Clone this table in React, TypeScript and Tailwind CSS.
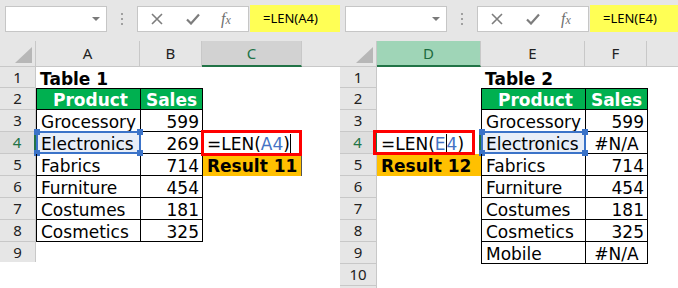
import React from 'react';

const cellFont = "font-['DejaVu_Sans','Verdana',sans-serif] text-[17px] leading-none";
const hdrFont = "font-['Noto_Sans','Segoe_UI',sans-serif] text-[15px]";

// Formula bar strip with name box, separator dots, fx box and the yellow formula text
const Toolbar: React.FC<{ formula: string }> = ({ formula }) => (
    <div className="h-[41px] shrink-0 bg-[#e6e6e6] flex items-start pt-[6px] pl-[5px]">
        <div className="w-[102px] h-[26px] bg-white border border-[#c6c6c6] flex items-center justify-end pr-[6px]">
            <svg width="8" height="4" viewBox="0 0 8 4"><path d="M0 0H8L4 4Z" fill="#7a7a7a" /></svg>
        </div>
        <div className="w-[30px] h-[26px] flex flex-col items-center justify-center gap-[3px]">
            <div className="w-[2px] h-[2px] bg-[#a0a0a0]" />
            <div className="w-[2px] h-[2px] bg-[#a0a0a0]" />
            <div className="w-[2px] h-[2px] bg-[#a0a0a0]" />
        </div>
        <div className="w-[112px] h-[26px] bg-white border border-[#c6c6c6] flex items-center">
            <svg className="ml-[13px]" width="12" height="12" viewBox="0 0 12 12">
                <path d="M1 1L11 11M11 1L1 11" stroke="#7d7d7d" strokeWidth="1.6" fill="none" />
            </svg>
            <svg className="ml-[23px]" width="14" height="12" viewBox="0 0 14 12">
                <path d="M1 6.5L5 10.5L13 1.5" stroke="#7d7d7d" strokeWidth="2.2" fill="none" />
            </svg>
            <span className="ml-[21px] font-['Liberation_Serif',serif] italic text-[16px] text-[#6f6f6f] leading-none">
                f<span className="text-[12px]">x</span>
            </span>
        </div>
        <div className="flex-1 h-[27px] -mt-[1px] ml-[1px] bg-[#ffff55] flex items-center pl-[13px] font-['Noto_Sans','Segoe_UI',sans-serif] text-[13px] text-black">
            {formula}
        </div>
    </div>
);

const Corner: React.FC<{ w: string }> = ({ w }) => (
    <div className={`${w} shrink-0 h-full border-r border-[#c8c8c8] flex items-end justify-end pr-[3px] pb-[3px]`}>
        <svg width="17" height="16" viewBox="0 0 17 16"><path d="M17 0V16H0Z" fill="#b7b7b7" /></svg>
    </div>
);

const Cursor: React.FC = () => <span className="inline-block w-px h-[19px] bg-black -mt-[3px]" />;

const Handles: React.FC = () => (
    <div className="absolute -inset-[1px] border-2 border-[#3b73c8] pointer-events-none">
        <div className="absolute -top-[4px] -left-[4px] w-[6px] h-[6px] bg-[#3b73c8]" />
        <div className="absolute -top-[4px] -right-[4px] w-[6px] h-[6px] bg-[#3b73c8]" />
        <div className="absolute -bottom-[4px] -left-[4px] w-[6px] h-[6px] bg-[#3b73c8]" />
        <div className="absolute -bottom-[4px] -right-[4px] w-[6px] h-[6px] bg-[#3b73c8]" />
    </div>
);

const rowHdr = `shrink-0 h-full flex items-center justify-center border-r border-b border-[#c8c8c8] bg-[#e6e6e6] text-[#222] ${hdrFont}`;
const rowHdrActive = `shrink-0 h-full flex items-center justify-center border-b border-[#c8c8c8] border-r-2 border-r-[#217346] bg-[#dedede] text-[#217346] ${hdrFont}`;

// table cells
const tName = "w-[104px] shrink-0 h-full border-l border-b border-black flex items-center pl-[4px] pt-[3px]";
const tNum = "w-[63px] shrink-0 h-full border-x border-b border-black flex items-center justify-end pr-[3px] pt-[3px]";
const tNumC = "w-[63px] shrink-0 h-full border-x border-b border-black flex items-center justify-center pt-[3px]";
const gHead = "bg-[#00b050] text-white font-bold justify-center pl-0 border-t";

const leftData: [string, string][] = [
    ['Grocessory', '599'],
    ['Electronics', '269'],
    ['Fabrics', '714'],
    ['Furniture', '454'],
    ['Costumes', '181'],
    ['Cosmetics', '325'],
];

const rightData: [string, string][] = [
    ['Grocessory', '599'],
    ['Electronics', '#N/A'],
    ['Fabrics', '714'],
    ['Furniture', '454'],
    ['Costumes', '181'],
    ['Cosmetics', '325'],
    ['Mobile', '#N/A'],
];

const LeftSheet: React.FC = () => (
    <div className="w-[340px] shrink-0 h-[288px] flex flex-col bg-white overflow-hidden">
        <Toolbar formula="=LEN(A4)" />
        {/* column headers */}
        <div className={`h-[26px] shrink-0 flex bg-[#e6e6e6] border-b border-[#c8c8c8] text-[#222] ${hdrFont}`}>
            <Corner w="w-[36px]" />
            <div className="w-[104px] shrink-0 border-r border-[#c8c8c8] flex items-center justify-center">A</div>
            <div className="w-[62px] shrink-0 border-r border-[#c8c8c8] flex items-center justify-center">B</div>
            <div className="w-[100px] shrink-0 border-r border-[#c8c8c8] bg-[#d2d2d2] border-b-2 border-b-[#217346] -mb-[1px] flex items-center justify-center text-[#217346]">C</div>
            <div className="flex-1" />
        </div>
        <div className={`flex flex-col ${cellFont}`}>
            <div className="h-[21px] flex">
                <div className={`w-[36px] ${rowHdr}`}>1</div>
                <div className="w-[104px] shrink-0 flex items-center pl-[4px] pt-[4px] font-bold">Table 1</div>
            </div>
            <div className="h-[22px] flex">
                <div className={`w-[36px] ${rowHdr}`}>2</div>
                <div className={`${tName} ${gHead}`}>Product</div>
                <div className={`${tNumC} ${gHead}`}>Sales</div>
            </div>
            {leftData.map(([p, s], i) => {
                const r = i + 3;
                return (
                    <div key={p} className="h-[22px] flex">
                        <div className={`w-[36px] ${r === 4 ? rowHdrActive : rowHdr}`}>{r}</div>
                        <div className={`${tName} relative ${r === 4 ? 'bg-[#e8eef8]' : ''}`}>
                            {p}
                            {r === 4 && <Handles />}
                        </div>
                        <div className={tNum}>{s}</div>
                        {r === 4 && (
                            <div className="w-[100px] shrink-0 h-full relative flex items-center pl-[4px] pt-[3px]">
                                <span>=LEN(</span><span className="text-[#4472c4]">A4</span><span>)</span><Cursor />
                                <div className="absolute -left-[2px] -top-[2px] w-[101px] h-[26px] border-[3px] border-[#ff0000]" />
                            </div>
                        )}
                        {r === 5 && (
                            <div className="w-[99px] shrink-0 h-full bg-[#ffc000] border-r border-[#555] flex items-center pl-[4px] pt-[3px] font-bold">Result 11</div>
                        )}
                    </div>
                );
            })}
            <div className="h-[20px] flex">
                <div className={`w-[36px] ${rowHdr} border-b-0`}>9</div>
            </div>
        </div>
        <div className="flex-1 bg-white" />
    </div>
);

const RightSheet: React.FC = () => (
    <div className="flex-1 h-[288px] flex flex-col bg-white overflow-hidden">
        <Toolbar formula="=LEN(E4)" />
        <div className={`h-[26px] shrink-0 flex bg-[#e6e6e6] border-b border-[#c8c8c8] text-[#222] ${hdrFont}`}>
            <Corner w="w-[37px]" />
            <div className="w-[104px] shrink-0 border-r border-[#c8c8c8] bg-[#9fd5b7] border-b-2 border-b-[#217346] -mb-[1px] flex items-center justify-center text-[#1d6b3f]">D</div>
            <div className="w-[104px] shrink-0 border-r border-[#c8c8c8] flex items-center justify-center">E</div>
            <div className="w-[62px] shrink-0 border-r border-[#c8c8c8] flex items-center justify-center">F</div>
            <div className="flex-1" />
        </div>
        <div className={`flex flex-col ${cellFont}`}>
            <div className="h-[21px] flex">
                <div className={`w-[37px] ${rowHdr}`}>1</div>
                <div className="w-[104px] shrink-0" />
                <div className="w-[104px] shrink-0 flex items-center pl-[4px] pt-[4px] font-bold">Table 2</div>
            </div>
            <div className="h-[22px] flex">
                <div className={`w-[37px] ${rowHdr}`}>2</div>
                <div className="w-[104px] shrink-0" />
                <div className={`${tName} ${gHead}`}>Product</div>
                <div className={`${tNumC} ${gHead}`}>Sales</div>
            </div>
            {rightData.map(([p, s], i) => {
                const r = i + 3;
                return (
                    <div key={p} className="h-[22px] flex">
                        <div className={`w-[37px] ${r === 4 ? rowHdrActive : rowHdr}`}>{r}</div>
                        {r === 4 ? (
                            <div className="w-[104px] shrink-0 h-full relative flex items-center pl-[4px] pt-[3px] border-r-2 border-[#217346]">
                                <span>=LEN(</span><span className="text-[#4472c4]">E</span><Cursor /><span className="text-[#4472c4]">4</span><span>)</span>
                                <div className="absolute -left-[4px] -top-[2px] w-[102px] h-[25px] border-[3px] border-[#ff0000]" />
                            </div>
                        ) : r === 5 ? (
                            <div className="w-[104px] shrink-0 h-full bg-[#ffc000] flex items-center pl-[4px] pt-[3px] font-bold">Result 12</div>
                        ) : (
                            <div className="w-[104px] shrink-0" />
                        )}
                        <div className={`${tName} relative ${r === 4 ? 'bg-[#e8eef8]' : ''}`}>
                            {p}
                            {r === 4 && <Handles />}
                        </div>
                        <div className={s === '#N/A' ? tNumC : tNum}>{s}</div>
                    </div>
                );
            })}
            <div className="h-[22px] flex">
                <div className={`w-[37px] ${rowHdr}`}>10</div>
            </div>
            <div className="h-[10px] flex">
                <div className={`w-[37px] ${rowHdr}`} />
            </div>
        </div>
    </div>
);

const App: React.FC = () => (
    <div className="w-[678px] h-[288px] flex bg-white overflow-hidden">
        <LeftSheet />
        <RightSheet />
    </div>
);

export default App;
